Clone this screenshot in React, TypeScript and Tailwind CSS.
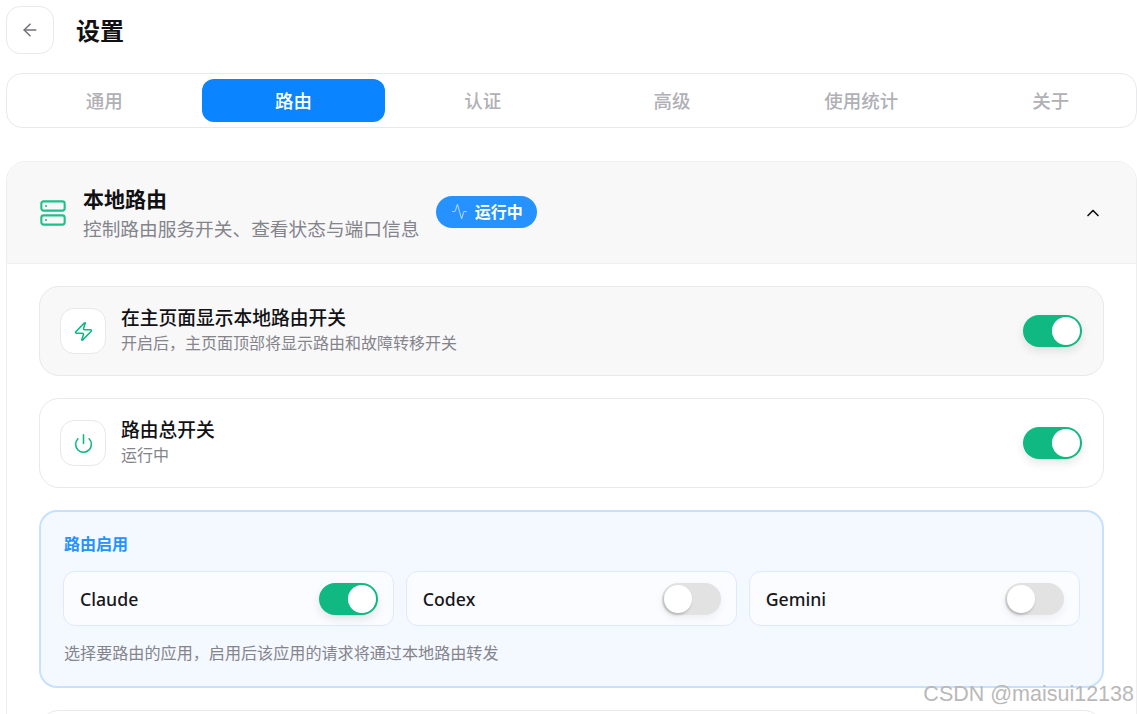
import { Activity, ArrowLeft, ChevronUp, Power, Server, Zap } from "lucide-react";
import type { ReactNode } from "react";

const tabs = ["通用", "路由", "认证", "高级", "使用统计", "关于"];

const Toggle = ({ on }: { on: boolean }) =>
  on ? (
    <div className="flex h-8 w-[59px] shrink-0 items-center justify-end rounded-full bg-[#10b981] pr-[2px] shadow-[0_4px_10px_rgba(0,0,0,0.1)]">
      <div className="h-[28px] w-[28px] rounded-full bg-white" />
    </div>
  ) : (
    <div className="flex h-8 w-[59px] shrink-0 items-center justify-start rounded-full bg-[#e2e2e3] pl-[2px] shadow-[0_4px_10px_rgba(0,0,0,0.05)]">
      <div className="h-[28px] w-[28px] rounded-full bg-white shadow-[-1px_2px_3px_rgba(0,0,0,0.2)]" />
    </div>
  );

const SettingRow = ({ icon, title, desc, muted }: { icon: ReactNode; title: string; desc: string; muted?: boolean }) => (
  <div className={`flex h-[90px] items-center rounded-[20px] border border-[#e9e9eb] pl-[20px] pr-[21px] ${muted ? "bg-[#f8f8f9]" : "bg-white"}`}>
    <div className="flex h-[46px] w-[46px] shrink-0 items-center justify-center rounded-[14px] border border-[#e8e8ea] bg-white text-[#10b981]">
      {icon}
    </div>
    <div className="ml-[15px] flex-1 pb-[2px]">
      <div className="mb-[2px] text-[18.75px] leading-[25px] font-medium text-[#111113]">{title}</div>
      <div className="text-[16px] leading-[23px] text-[#84848b]">{desc}</div>
    </div>
    <Toggle on />
  </div>
);

const AppCell = ({ name, on }: { name: string; on: boolean }) => (
  <div className="flex h-[55px] items-center justify-between rounded-[12px] border border-[#ddeafd] bg-[#fbfcff] pl-4 pr-[15px]">
    <span className="pt-[2px] text-[17.7px] font-medium text-[#17171a]">{name}</span>
    <Toggle on={on} />
  </div>
);

export default function App() {
  return (
    <div
      className="relative h-[714px] w-[1137px] overflow-hidden bg-white pl-[6px]"
      style={{ fontFamily: '"Noto Sans", "Noto Sans CJK SC", sans-serif' }}
    >
      <header className="flex h-[73px] items-start pt-[6px]">
        <button className="flex h-[48px] w-[48px] items-center justify-center rounded-[14px] border border-[#e9e9eb] bg-white text-[#71717a]">
          <ArrowLeft size={20} strokeWidth={1.8} />
        </button>
        <h1 className="ml-[22px] text-[24px] leading-[49px] font-semibold text-[#111113]">设置</h1>
      </header>

      <nav className="grid h-[55px] w-[1131px] grid-cols-[repeat(6,183px)] gap-[6.3px] rounded-[16px] border border-[#e9e9eb] py-[5px] pl-[5.7px]">
        {tabs.map((tab) => (
          <div
            key={tab}
            className={`flex items-center justify-center rounded-[12px] text-[18.5px] font-medium ${tab === "路由" ? "bg-[#0a84ff] text-white" : "text-[#b0b0b5]"}`}
          >
            {tab}
          </div>
        ))}
      </nav>

      <section className="mt-[33px] w-[1131px] rounded-t-[20px] border border-[#eeeeef]">
        <div className="flex h-[102px] items-center rounded-t-[20px] border-b border-[#efeff0] bg-[#f8f8f9] pl-[32px] pr-[33px]">
          <Server size={28} strokeWidth={1.8} className="shrink-0 text-[#1dbf8b]" />
          <div className="ml-[16px] pt-[2px]">
            <div className="text-[21px] leading-[28px] font-semibold text-[#111113]">本地路由</div>
            <div className="mt-[3px] text-[18.7px] leading-[26px] text-[#84848b]">控制路由服务开关、查看状态与端口信息</div>
          </div>
          <div className="mb-[2px] ml-[17px] flex h-8 w-[101px] items-center justify-center gap-[7px] rounded-full bg-[#2592ff] text-[16px] font-semibold text-white">
            <Activity size={17} strokeWidth={1.5} className="text-[#a9d4ff]" />
            运行中
          </div>
          <ChevronUp size={20} strokeWidth={2} className="ml-auto text-[#111113]" />
        </div>

        <div className="flex flex-col gap-[22px] px-[32px] pt-[22px]">
          <SettingRow icon={<Zap size={21} strokeWidth={1.8} />} title="在主页面显示本地路由开关" desc="开启后，主页面顶部将显示路由和故障转移开关" muted />
          <SettingRow icon={<Power size={21} strokeWidth={1.8} />} title="路由总开关" desc="运行中" />

          <div className="h-[178px] rounded-[18px] border-2 border-[#c6e1fe] bg-[#f4f8ff] px-[22px] pt-[20px]">
            <div className="ml-px text-[16px] leading-[24px] font-semibold text-[#2592ff]">路由启用</div>
            <div className="mt-[15px] grid grid-cols-3 gap-[11.5px]">
              <AppCell name="Claude" on />
              <AppCell name="Codex" on={false} />
              <AppCell name="Gemini" on={false} />
            </div>
            <p className="mt-[16px] ml-px text-[16.1px] leading-[22px] text-[#84848b]">选择要路由的应用，启用后该应用的请求将通过本地路由转发</p>
          </div>

          <div className="h-[60px] rounded-t-[20px] border border-[#e9e9eb] bg-white" />
        </div>
      </section>

      <div
        className="absolute top-[681px] right-[3px] text-[21.5px] leading-[26px] text-[#b9b9b9]"
        style={{ fontFamily: '"Liberation Sans", sans-serif' }}
      >
        CSDN @maisui12138
      </div>
    </div>
  );
}
